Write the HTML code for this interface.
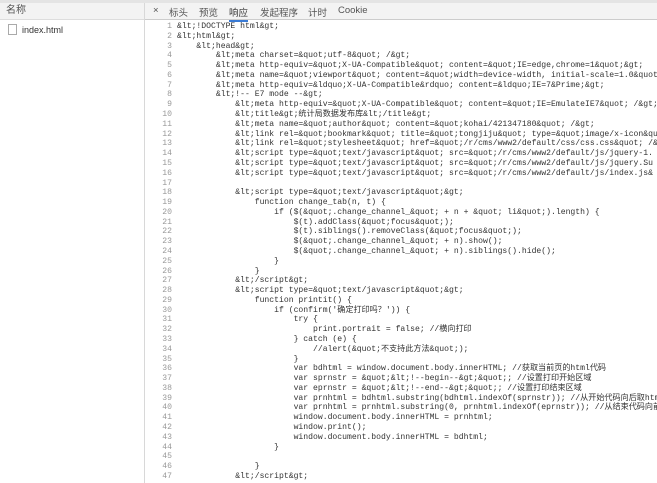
<!DOCTYPE html>
<html><head><meta charset="utf-8"><style>
body{margin:0;width:657px;height:483px;overflow:hidden;background:#fff;font-family:"Liberation Sans","Noto Sans CJK SC",sans-serif;position:relative}
.top{position:absolute;left:0;top:0;width:657px;height:3px;background:#e4e4e4}
.left{position:absolute;left:0;top:3px;width:144px;height:480px;border-right:1px solid #d8d8d8;background:#fff}
.lh{height:16px;border-bottom:1px solid #ddd;background:#f3f3f3;font-size:10px;color:#555;padding-left:6px;line-height:16px}
.file{font-size:9px;color:#333;padding:4px 0 0 8px;display:flex;align-items:center}
.file i{display:inline-block;width:7px;height:9px;border:1px solid #aaa;margin-right:5px}
.tabs{position:absolute;left:145px;top:3px;width:512px;height:16px;border-bottom:1px solid #ccc;background:#f3f3f3;font-size:9.5px;color:#555}
.tabs span{position:absolute;top:2px}
.act{border-bottom:2px solid #3a7bd5;padding-bottom:1px;color:#333}
pre{position:absolute;margin:0;top:22px;font-family:"Liberation Mono","Noto Sans CJK SC",monospace;font-size:8.1px;line-height:9.78px;color:#333;overflow:hidden}
.ln{left:150px;width:22px;text-align:right;color:#999}
.code{left:177px;width:480px;white-space:pre}
</style></head><body>
<div class="top"></div>
<div class="left"><div class="lh">名称</div><div class="file"><i></i>index.html</div></div>
<div class="tabs"><span style="left:8px">×</span><span style="left:24px">标头</span><span style="left:54px">预览</span><span class="act" style="left:84px">响应</span><span style="left:115px">发起程序</span><span style="left:163px">计时</span><span style="left:193px">Cookie</span></div>
<pre class="ln">1
2
3
4
5
6
7
8
9
10
11
12
13
14
15
16
17
18
19
20
21
22
23
24
25
26
27
28
29
30
31
32
33
34
35
36
37
38
39
40
41
42
43
44
45
46
47</pre>
<pre class="code">&amp;lt;!DOCTYPE html&amp;gt;
&amp;lt;html&amp;gt;
    &amp;lt;head&amp;gt;
        &amp;lt;meta charset=&amp;quot;utf-8&amp;quot; /&amp;gt;
        &amp;lt;meta http-equiv=&amp;quot;X-UA-Compatible&amp;quot; content=&amp;quot;IE=edge,chrome=1&amp;quot;&amp;gt;
        &amp;lt;meta name=&amp;quot;viewport&amp;quot; content=&amp;quot;width=device-width, initial-scale=1.0&amp;quot;
        &amp;lt;meta http-equiv=&amp;ldquo;X-UA-Compatible&amp;rdquo; content=&amp;ldquo;IE=7&amp;Prime;&amp;gt;
        &amp;lt;!-- E7 mode --&amp;gt;
            &amp;lt;meta http-equiv=&amp;quot;X-UA-Compatible&amp;quot; content=&amp;quot;IE=EmulateIE7&amp;quot; /&amp;gt;
            &amp;lt;title&amp;gt;统计局数据发布库&amp;lt;/title&amp;gt;
            &amp;lt;meta name=&amp;quot;author&amp;quot; content=&amp;quot;kohai/421347180&amp;quot; /&amp;gt;
            &amp;lt;link rel=&amp;quot;bookmark&amp;quot; title=&amp;quot;tongjiju&amp;quot; type=&amp;quot;image/x-icon&amp;quot;
            &amp;lt;link rel=&amp;quot;stylesheet&amp;quot; href=&amp;quot;/r/cms/www2/default/css/css.css&amp;quot; /&amp;gt;
            &amp;lt;script type=&amp;quot;text/javascript&amp;quot; src=&amp;quot;/r/cms/www2/default/js/jquery-1.
            &amp;lt;script type=&amp;quot;text/javascript&amp;quot; src=&amp;quot;/r/cms/www2/default/js/jquery.Su
            &amp;lt;script type=&amp;quot;text/javascript&amp;quot; src=&amp;quot;/r/cms/www2/default/js/index.js&amp;

            &amp;lt;script type=&amp;quot;text/javascript&amp;quot;&amp;gt;
                function change_tab(n, t) {
                    if ($(&amp;quot;.change_channel_&amp;quot; + n + &amp;quot; li&amp;quot;).length) {
                        $(t).addClass(&amp;quot;focus&amp;quot;);
                        $(t).siblings().removeClass(&amp;quot;focus&amp;quot;);
                        $(&amp;quot;.change_channel_&amp;quot; + n).show();
                        $(&amp;quot;.change_channel_&amp;quot; + n).siblings().hide();
                    }
                }
            &amp;lt;/script&amp;gt;
            &amp;lt;script type=&amp;quot;text/javascript&amp;quot;&amp;gt;
                function printit() {
                    if (confirm('确定打印吗？')) {
                        try {
                            print.portrait = false; //横向打印
                        } catch (e) {
                            //alert(&amp;quot;不支持此方法&amp;quot;);
                        }
                        var bdhtml = window.document.body.innerHTML; //获取当前页的html代码
                        var sprnstr = &amp;quot;&amp;lt;!--begin--&amp;gt;&amp;quot;; //设置打印开始区域
                        var eprnstr = &amp;quot;&amp;lt;!--end--&amp;gt;&amp;quot;; //设置打印结束区域
                        var prnhtml = bdhtml.substring(bdhtml.indexOf(sprnstr)); //从开始代码向后取html
                        var prnhtml = prnhtml.substring(0, prnhtml.indexOf(eprnstr)); //从结束代码向前取html
                        window.document.body.innerHTML = prnhtml;
                        window.print();
                        window.document.body.innerHTML = bdhtml;
                    }

                }
            &amp;lt;/script&amp;gt;</pre>
</body></html>
